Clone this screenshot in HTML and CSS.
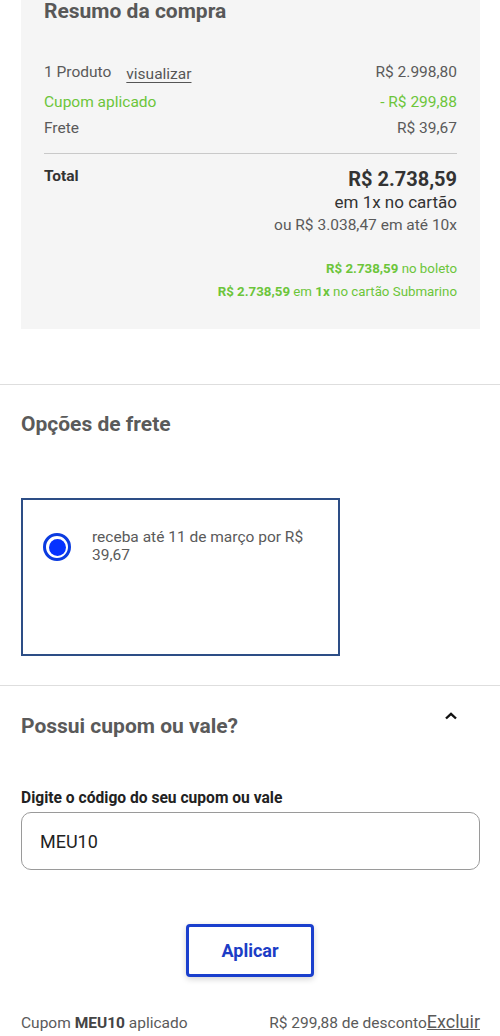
FILE: index.html
```html
<!DOCTYPE html>
<html lang="pt-BR">
<head>
<meta charset="utf-8">
<title>Resumo da compra</title>
<link rel="stylesheet" href="styles.css">
</head>
<body>
<section class="summary">
  <h2 class="summary-title">Resumo da compra</h2>
  <div class="row row-product">
    <span class="product">1 Produto <a class="link" href="#">visualizar</a></span>
    <span>R$ 2.998,80</span>
  </div>
  <div class="row row-green">
    <span>Cupom aplicado</span>
    <span>- R$ 299,88</span>
  </div>
  <div class="row">
    <span>Frete</span>
    <span>R$ 39,67</span>
  </div>
  <div class="rule"></div>
  <div class="total-row">
    <span class="total-label">Total</span>
    <span class="total-price">R$ 2.738,59</span>
  </div>
  <div class="total-sub">em 1x no cartão</div>
  <div class="total-alt">ou R$ 3.038,47 em até 10x</div>
  <div class="promo promo-first"><b>R$ 2.738,59</b> no boleto</div>
  <div class="promo"><b>R$ 2.738,59</b> em <b>1x</b> no cartão Submarino</div>
</section>

<div class="divider divider-first"></div>

<section class="section">
  <h2 class="section-title">Opções de frete</h2>
  <div class="ship-card">
    <span class="radio"><span class="radio-dot"></span></span>
    <span class="ship-text">receba até 11 de março por R$ 39,67</span>
  </div>
</section>

<div class="divider divider-second"></div>

<section class="section">
  <div class="coupon-head">
    <h2 class="section-title coupon-title">Possui cupom ou vale?</h2>
    <svg class="chevron" width="14" height="10" viewBox="0 0 14 10" aria-hidden="true">
      <path d="M2 7.5 L7 2.8 L12 7.5" fill="none" stroke="#111" stroke-width="2.4"/>
    </svg>
  </div>
  <label class="field-label" for="code">Digite o código do seu cupom ou vale</label>
  <div class="input-box" id="code">MEU10</div>
  <div class="btn-wrap">
    <button class="btn" type="button">Aplicar</button>
  </div>
  <div class="applied">
    <span>Cupom <b>MEU10</b> aplicado</span>
    <span class="applied-right">R$ 299,88 de desconto<a class="excluir" href="#">Excluir</a></span>
  </div>
</section>
</body>
</html>
```

FILE: styles.css
```css
* { box-sizing: border-box; }
html, body { margin: 0; padding: 0; background: #fff; }
body {
  font-family: Roboto, "Liberation Sans", Arial, sans-serif;
  color: #555;
  width: 500px;
}
h2 { margin: 0; }

.summary {
  margin: 0 20px 0 21px;
  background: #f5f5f5;
  padding: 0 23px 26px 23px;
}
.summary-title {
  font-size: 21px;
  line-height: 22px;
  font-weight: 700;
  color: #585858;
  margin-bottom: 35px;
}
.row {
  display: flex;
  justify-content: space-between;
  align-items: center;
  font-size: 15.5px;
  line-height: 20px;
  color: #5a5a5a;
  margin-top: 6px;
}
.row-product { height: 29px; margin-top: 0; }
.product { display: flex; align-items: center; }
.link {
  color: #555;
  text-decoration: underline;
  text-underline-offset: 3px;
  margin-left: 15px;
  padding-top: 4px;
}
.row-green { color: #6cc53a; }
.rule {
  height: 1px;
  background: #c9c9c9;
  margin-top: 15px;
}
.total-row {
  display: flex;
  justify-content: space-between;
  align-items: flex-start;
  margin-top: 12px;
}
.total-label {
  font-size: 15.5px;
  font-weight: 700;
  line-height: 20px;
  color: #333;
}
.total-price {
  font-size: 20px;
  font-weight: 700;
  line-height: 26px;
  color: #333;
}
.total-sub {
  text-align: right;
  font-size: 17px;
  line-height: 18px;
  color: #333;
  margin-top: 1px;
}
.total-alt {
  text-align: right;
  font-size: 15.5px;
  line-height: 18px;
  color: #5a5a5a;
  margin-top: 5px;
}
.promo {
  text-align: right;
  font-size: 13.3px;
  line-height: 23px;
  color: #6cc53a;
}
.promo b { font-weight: 700; }
.promo-first { margin-top: 23px; }

.divider {
  height: 1px;
  background: #dedede;
}
.divider-first { margin-top: 55px; }
.divider-second { margin-top: 29px; }

.section { padding: 0 20px 0 21px; }
.section-title {
  font-size: 21px;
  line-height: 24px;
  font-weight: 700;
  color: #5a5a5a;
  padding-top: 27px;
}
.ship-card {
  margin-top: 62px;
  width: 319px;
  height: 158px;
  border: 2px solid #2d4e86;
  display: flex;
  align-items: flex-start;
  padding: 28px 18px 0 20px;
}
.radio {
  flex: none;
  width: 28px;
  height: 28px;
  border: 3px solid #0b3be0;
  border-radius: 50%;
  margin-top: 5px;
  display: flex;
  align-items: center;
  justify-content: center;
}
.radio-dot {
  width: 17px;
  height: 17px;
  border-radius: 50%;
  background: #0632ff;
}
.ship-text {
  margin-left: 21px;
  font-size: 15.5px;
  line-height: 18px;
  color: #5a5a5a;
}

.coupon-head {
  display: flex;
  justify-content: space-between;
  align-items: flex-start;
  padding-top: 21px;
}
.coupon-title { padding-top: 7px; }
.chevron { margin-top: 4px; margin-right: 22px; }
.field-label {
  display: block;
  margin-top: 51px;
  font-size: 15.6px;
  line-height: 18px;
  font-weight: 700;
  color: #222;
}
.input-box {
  margin-top: 5px;
  height: 58px;
  border: 1px solid #9a9a9a;
  border-radius: 10px;
  padding: 0 18px;
  display: flex;
  align-items: center;
  font-size: 18px;
  color: #222;
}
.btn-wrap {
  display: flex;
  justify-content: center;
  margin-top: 54px;
  padding-right: 1px;
}
.btn {
  width: 128px;
  height: 53px;
  background: #fff;
  border: 3px solid #1a3fcd;
  border-radius: 4px;
  box-shadow: 0 2px 6px rgba(0, 0, 0, 0.18);
  font-family: inherit;
  font-size: 18px;
  font-weight: 700;
  color: #1c3dc6;
}
.applied {
  margin-top: 34px;
  display: flex;
  justify-content: space-between;
  align-items: baseline;
  font-size: 15.5px;
  line-height: 22px;
  color: #5a5a5a;
}
.applied b { color: #444; }
.excluir {
  font-size: 18px;
  color: #5a5a5a;
  text-decoration: underline;
}
```
